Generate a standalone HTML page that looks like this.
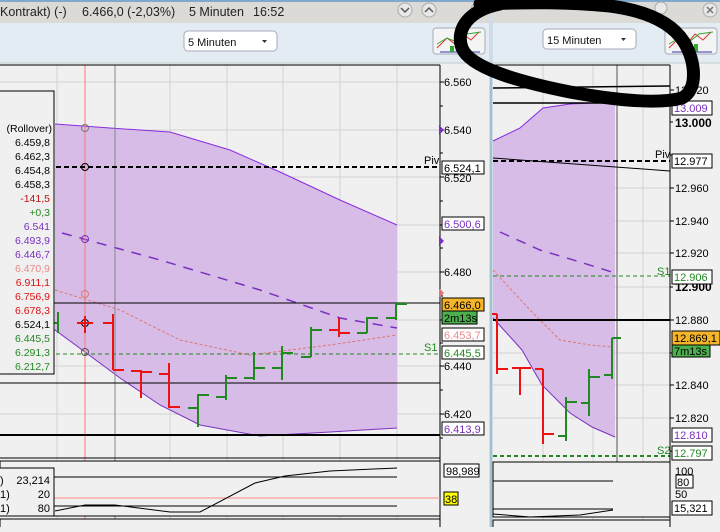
<!DOCTYPE html>
<html><head><meta charset="utf-8"><style>
body{margin:0;width:720px;height:527px;overflow:hidden;background:#f0f0f0;font-family:"Liberation Sans",sans-serif;}
</style></head><body>
<svg width="720" height="527" xmlns="http://www.w3.org/2000/svg" font-family="Liberation Sans, sans-serif">
<rect width="720" height="527" fill="#f0f0f0"/>
<rect x="0" y="0" width="720" height="23" fill="#dcdad6"/>
<rect x="0" y="0" width="720" height="2" fill="#7fa8cc"/>
<g font-size="12.5" fill="#222"><text x="0" y="16">Kontrakt) (-)</text><text x="82" y="16">6.466,0 (-2,03%)</text><text x="189" y="16">5 Minuten</text><text x="253" y="16">16:52</text></g>
<circle cx="405" cy="10" r="7" fill="#e8e8e8" stroke="#aaa"/><path d="M401 8l4 4 4-4" stroke="#555" fill="none" stroke-width="1.5"/>
<circle cx="429" cy="10" r="7" fill="#e8e8e8" stroke="#aaa"/><path d="M425 12l4-4 4 4" stroke="#555" fill="none" stroke-width="1.5"/>
<circle cx="478" cy="10" r="7" fill="#e8e8e8" stroke="#aaa"/>
<circle cx="661" cy="8" r="6" fill="#e8e8e8" stroke="#aaa"/>
<circle cx="710" cy="10" r="7" fill="#e8e8e8" stroke="#aaa"/><path d="M707 7l6 6M713 7l-6 6" stroke="#777" stroke-width="1.5"/>
<rect x="0" y="23" width="490" height="40" fill="#e3ebf3"/>
<rect x="493" y="23" width="227" height="40" fill="#e3ebf3"/>
<rect x="184" y="31" width="93" height="20" rx="4" fill="#fff" stroke="#aab"/>
<text x="188" y="46" font-size="11" fill="#111">5 Minuten</text><path d="M262 40h5l-2.5 3z" fill="#333"/>
<rect x="543" y="29" width="93" height="20" rx="4" fill="#fff" stroke="#aab"/>
<text x="547" y="44" font-size="11" fill="#111">15 Minuten</text><path d="M621 38h5l-2.5 3z" fill="#333"/>
<rect x="433" y="28" width="52" height="26" rx="3" fill="#f4f4f4" stroke="#aab"/>
<path d="M437 48l10-10 8 6 8-10 8 6 8-8" stroke="#d33" fill="none"/><path d="M437 44l10-6 10 4 10-8 14-2" stroke="#3a3" fill="none"/>
<path d="M440 52h40" stroke="#33a"/><rect x="450" y="46" width="4" height="6" fill="#3a3"/><rect x="462" y="44" width="4" height="8" fill="#3a3"/>
<rect x="665" y="28" width="52" height="26" rx="3" fill="#f4f4f4" stroke="#aab"/>
<path d="M669 48l10-10 8 6 8-10 8 6 8-8" stroke="#d33" fill="none"/><path d="M669 44l10-6 10 4 10-8 14-2" stroke="#3a3" fill="none"/>
<path d="M672 52h40" stroke="#33a"/><rect x="682" y="46" width="4" height="6" fill="#3a3"/><rect x="694" y="44" width="4" height="8" fill="#3a3"/>
<line x1="0" y1="63" x2="720" y2="63" stroke="#bcc"/>
<rect x="489" y="0" width="4" height="527" fill="#cfdbe6"/><line x1="491" y1="63" x2="491" y2="527" stroke="#7ab"/>
<g stroke="#d2d2d2">
<line x1="57" y1="65" x2="57" y2="527"/><line x1="170" y1="65" x2="170" y2="527"/><line x1="227" y1="65" x2="227" y2="527"/><line x1="283" y1="65" x2="283" y2="527"/><line x1="340" y1="65" x2="340" y2="527"/><line x1="397" y1="65" x2="397" y2="527"/>
<line x1="0" y1="82" x2="440" y2="82"/><line x1="0" y1="130" x2="440" y2="130"/><line x1="0" y1="177" x2="440" y2="177"/><line x1="0" y1="225" x2="440" y2="225"/><line x1="0" y1="272" x2="440" y2="272"/><line x1="0" y1="320" x2="440" y2="320"/><line x1="0" y1="366" x2="440" y2="366"/><line x1="0" y1="414" x2="440" y2="414"/>
</g>
<path d="M55 124 L110 128 L170 132 L230 150 L280 172 L340 200 L397 225 L397 428 L330 432 L260 436 L200 425 L160 405 L120 378 L85 352 L55 330 Z" fill="#d6bce6"/>
<path d="M55 124 L110 128 L170 132 L230 150 L280 172 L340 200 L397 225" stroke="#8a2be2" fill="none"/>
<path d="M0 320 L55 330 L85 352 L120 378 L160 405 L200 425 L260 436 L330 432 L397 428" stroke="#7a30c0" fill="none"/>
<path d="M62 233 L160 260 L260 290 L340 318 L397 328" stroke="#7a30c0" stroke-dasharray="10 8" fill="none" stroke-width="1.5"/>
<path d="M55 290 L120 310 L180 340 L250 355 L330 345 L397 335" stroke="#d77" stroke-dasharray="3 2" fill="none"/>
<line x1="115" y1="65" x2="115" y2="527" stroke="#888"/>
<line x1="85" y1="65" x2="85" y2="527" stroke="#f77"/>
<line x1="0" y1="303" x2="440" y2="303" stroke="#000"/><line x1="0" y1="383" x2="440" y2="383" stroke="#000"/><line x1="0" y1="435" x2="440" y2="435" stroke="#000" stroke-width="2"/>
<line x1="0" y1="354" x2="440" y2="354" stroke="#282" stroke-dasharray="4 3"/>
<line x1="0" y1="167" x2="440" y2="167" stroke="#000" stroke-width="2" stroke-dasharray="5 3"/>
<text x="424" y="164" font-size="11">Piv</text><text x="424" y="351" font-size="11" fill="#282">S1</text>
<g fill="none" stroke="#777"><circle cx="85" cy="128" r="3.5"/><circle cx="85" cy="167" r="3.5" stroke="#000"/><circle cx="85" cy="239" r="3.5" stroke="#7a30c0"/><circle cx="85" cy="294" r="3.5" stroke="#d77"/><circle cx="85" cy="323" r="3.5" stroke="#000"/><circle cx="85" cy="352" r="3.5" stroke="#555"/></g>
<g stroke-width="2" fill="none">
<path stroke="#282" d="M58 312V333M52 323h6"/>
<path stroke="#e11" d="M85 316V333M77 323h8M85 323h8"/>
<path stroke="#e11" d="M113 314V370M103 323h10M113 370h11"/>
<path stroke="#e11" d="M141 370V398M131 371h10M141 372h11"/>
<path stroke="#e11" d="M169 363V408M159 374h10M169 407h11"/>
<path stroke="#282" d="M198 394V427M188 408h10M198 395h11"/>
<path stroke="#282" d="M226 375V400M216 397h10M226 378h11"/>
<path stroke="#282" d="M254 352V380M244 378h10M254 368h11"/>
<path stroke="#282" d="M282 346V380M272 368h10M282 353h11"/>
<path stroke="#282" d="M311 327V357M301 357h10M311 330h11"/>
<path stroke="#e11" d="M339 318V337M329 330h10M339 333h11"/>
<path stroke="#282" d="M367 317V333M357 333h10M367 318h11"/>
<path stroke="#282" d="M396 302V320M386 318h10M396 304h11"/>
</g>
<rect x="-1" y="91" width="55" height="283" fill="#f0f0f0" stroke="#000"/>
<g font-size="10.5" text-anchor="end">
<text x="52" y="132">(Rollover)</text><text x="50" y="146">6.459,8</text><text x="50" y="160">6.462,3</text><text x="50" y="174">6.454,8</text><text x="50" y="188">6.458,3</text>
<text x="50" y="202" fill="#b11">-141,5</text><text x="50" y="216" fill="#282">+0,3</text><text x="50" y="230" fill="#7a30c0">6.541</text><text x="50" y="244" fill="#7a30c0">6.493,9</text><text x="50" y="258" fill="#7a30c0">6.446,7</text>
<text x="50" y="272" fill="#e88">6.470,9</text><text x="50" y="286" fill="#d11">6.911,1</text><text x="50" y="300" fill="#d11">6.756,9</text><text x="50" y="314" fill="#d11">6.678,3</text><text x="50" y="328">6.524,1</text>
<text x="50" y="342" fill="#282">6.445,5</text><text x="50" y="356" fill="#282">6.291,3</text><text x="50" y="370" fill="#282">6.212,7</text>
</g>
<line x1="0" y1="65" x2="440" y2="65" stroke="#000"/>
<line x1="0" y1="458" x2="440" y2="458" stroke="#000"/>
<line x1="440" y1="65" x2="440" y2="527" stroke="#000"/>
<g stroke="#000"><path d="M440 82h4M440 106h3M440 130h4M440 153h3M440 177h4M440 201h3M440 225h4M440 248h3M440 272h4M440 296h3M440 320h4M440 343h3M440 366h4M440 390h3M440 414h4M440 438h3"/></g>
<g font-size="11">
<text x="444" y="86">6.560</text><text x="444" y="134">6.540</text><text x="444" y="182">6.520</text><text x="444" y="276">6.480</text><text x="444" y="370">6.440</text><text x="444" y="418">6.420</text>
</g>
<g font-size="11">
<rect x="442" y="161" width="42" height="13" fill="#fff" stroke="#000"/><text x="444" y="172">6.524,1</text>
<rect x="442" y="217" width="42" height="13" fill="#fff" stroke="#000"/><text x="444" y="228" fill="#7a30c0">6.500,6</text>
<rect x="442" y="298" width="42" height="13" fill="#f5b52a" stroke="#000"/><text x="444" y="309">6.466,0</text>
<rect x="442" y="311" width="35" height="13" fill="#4cb04c" stroke="#000"/><text x="444" y="322">2m13s</text>
<rect x="442" y="328" width="42" height="13" fill="#fff" stroke="#000"/><text x="444" y="339" fill="#e88">6.453,7</text>
<rect x="442" y="346" width="42" height="13" fill="#fff" stroke="#000"/><text x="444" y="357" fill="#282">6.445,5</text>
<rect x="442" y="422" width="42" height="13" fill="#fff" stroke="#000"/><text x="444" y="433" fill="#7a30c0">6.413,9</text>
</g>
<path d="M439 125l5 5-5 5z" fill="#7a30c0"/><path d="M439 236l5 5-5 5z" fill="#7a30c0"/><path d="M439 288l5 5-5 5z" fill="#d77"/>
<rect x="0" y="461" width="440" height="55" fill="#f0f0f0" stroke="#000"/>
<line x1="0" y1="477" x2="397" y2="477" stroke="#000"/><line x1="0" y1="506" x2="397" y2="506" stroke="#000"/><line x1="0" y1="498" x2="440" y2="498" stroke="#f88"/>
<path d="M55 511 L85 505 L115 505 L170 512 L200 512 L255 483 L285 476 L330 471 L397 468" stroke="#000" fill="none"/>
<rect x="-1" y="468" width="55" height="48" fill="#f0f0f0" stroke="#000"/>
<g font-size="11" text-anchor="end"><text x="50" y="484">23,214</text><text x="50" y="498">20</text><text x="50" y="512">80</text></g>
<text x="0" y="484" font-size="11">)</text><text x="0" y="498" font-size="11">1)</text><text x="0" y="512" font-size="11">1)</text>
<g font-size="11"><rect x="444" y="464" width="35" height="13" fill="#fff" stroke="#000"/><text x="446" y="475">98,989</text>
<rect x="444" y="492" width="14" height="13" fill="#ff0" stroke="#000"/><text x="445" y="503">38</text></g>
<rect x="0" y="519" width="440" height="10" fill="#f0f0f0" stroke="#000"/>
<g stroke="#d2d2d2">
<line x1="543" y1="65" x2="543" y2="527"/><line x1="593" y1="65" x2="593" y2="527"/><line x1="643" y1="65" x2="643" y2="527"/>
<line x1="493" y1="188" x2="670" y2="188"/><line x1="493" y1="221" x2="670" y2="221"/><line x1="493" y1="253" x2="670" y2="253"/><line x1="493" y1="287" x2="670" y2="287"/><line x1="493" y1="353" x2="670" y2="353"/><line x1="493" y1="385" x2="670" y2="385"/><line x1="493" y1="418" x2="670" y2="418"/>
</g>
<path d="M493 141 L520 128 L543 108 L570 104 L615 102 L615 437 L592 427 L570 413 L542 385 L522 350 L493 318 Z" fill="#d6bce6"/>
<path d="M493 141 L520 128 L543 108 L570 104 L615 102" stroke="#8a2be2" fill="none"/>
<path d="M493 318 L522 350 L542 385 L570 413 L592 427 L615 437" stroke="#7a30c0" fill="none"/>
<path d="M500 232 L540 250 L580 262 L612 272" stroke="#7a30c0" stroke-dasharray="10 8" fill="none" stroke-width="1.5"/>
<path d="M493 270 L530 310 L560 340 L590 345 L612 347" stroke="#d77" stroke-dasharray="3 2" fill="none"/>
<line x1="617" y1="65" x2="617" y2="462" stroke="#555"/>
<line x1="493" y1="88" x2="670" y2="86" stroke="#000" stroke-width="1.5"/><line x1="493" y1="103" x2="670" y2="103" stroke="#000" stroke-width="1.5"/>
<line x1="493" y1="161" x2="670" y2="161" stroke="#000" stroke-width="2" stroke-dasharray="5 3"/>
<line x1="493" y1="158" x2="670" y2="171" stroke="#000"/>
<line x1="493" y1="276" x2="670" y2="276" stroke="#282" stroke-dasharray="4 3"/>
<line x1="493" y1="320" x2="670" y2="320" stroke="#000" stroke-width="2"/>
<line x1="493" y1="456" x2="670" y2="456" stroke="#282" stroke-width="2" stroke-dasharray="4 3"/>
<text x="655" y="158" font-size="11">Piv</text><text x="657" y="275" font-size="11" fill="#282">S1</text><text x="657" y="454" font-size="11" fill="#282">S2</text>
<g stroke-width="2" fill="none">
<path stroke="#e11" d="M497 314V374M492 314h5M497 369h11"/>
<path stroke="#e11" d="M520 367V395M512 368h8M520 368h11"/>
<path stroke="#e11" d="M543 369V444M535 369h8M543 434h11"/>
<path stroke="#282" d="M566 397V441M558 436h8M566 402h11"/>
<path stroke="#282" d="M589 369V416M581 403h8M589 377h11"/>
<path stroke="#282" d="M612 338V379M604 375h8M612 338h9"/>
</g>
<line x1="670" y1="65" x2="670" y2="527" stroke="#000"/>
<g stroke="#000"><path d="M670 90h4M670 122h3M670 155h4M670 188h4M670 221h4M670 253h4M670 287h3M670 320h4M670 353h3M670 385h4M670 418h4M670 451h3"/></g>
<g font-size="11">
<text x="675" y="94">13.020</text><text x="675" y="127" font-weight="bold" font-size="12">13.000</text><text x="675" y="192">12.960</text><text x="675" y="225">12.940</text><text x="675" y="257">12.920</text><text x="675" y="291" font-weight="bold" font-size="12">12.900</text><text x="675" y="324">12.880</text><text x="675" y="389">12.840</text><text x="675" y="422">12.820</text>
<rect x="672" y="101" width="40" height="14" fill="#fff" stroke="#000"/><text x="674" y="112" fill="#7a30c0">13.009</text>
<rect x="672" y="154" width="40" height="14" fill="#fff" stroke="#000"/><text x="674" y="165">12.977</text>
<rect x="672" y="270" width="40" height="14" fill="#fff" stroke="#000"/><text x="674" y="281" fill="#282">12.906</text>
<rect x="672" y="331" width="48" height="14" fill="#f5b52a" stroke="#000"/><text x="674" y="342">12.869,1</text>
<rect x="672" y="345" width="38" height="12" fill="#4cb04c" stroke="#000"/><text x="674" y="355">7m13s</text>
<rect x="672" y="428" width="40" height="14" fill="#fff" stroke="#000"/><text x="674" y="439" fill="#7a30c0">12.810</text>
<rect x="672" y="446" width="40" height="14" fill="#fff" stroke="#000"/><text x="674" y="457" fill="#282">12.797</text>
</g>
<line x1="493" y1="65" x2="670" y2="65" stroke="#000"/>
<rect x="493" y="462" width="177" height="55" fill="#f0f0f0" stroke="#000"/>
<line x1="493" y1="481" x2="613" y2="481" stroke="#000"/><line x1="493" y1="509" x2="613" y2="509" stroke="#000"/>
<path d="M493 514 L530 517 L580 515 L613 510" stroke="#000" fill="none"/>
<g font-size="11"><text x="675" y="475">100</text><rect x="676" y="475" width="17" height="13" fill="#fff" stroke="#000"/><text x="677" y="486">80</text><text x="675" y="498">50</text>
<rect x="672" y="501" width="40" height="14" fill="#fff" stroke="#000"/><text x="674" y="512">15,321</text></g>
<rect x="493" y="520" width="177" height="10" fill="#f0f0f0" stroke="#000"/>
<path d="M500 4 C470 10 455 28 462 48 C470 68 520 82 570 92 C620 101 660 104 682 98 C698 90 696 62 684 42 C670 20 640 10 610 6 C570 2 530 2 480 4" stroke="#000" stroke-width="13" fill="none" stroke-linecap="round"/>
</svg>
</body></html>
